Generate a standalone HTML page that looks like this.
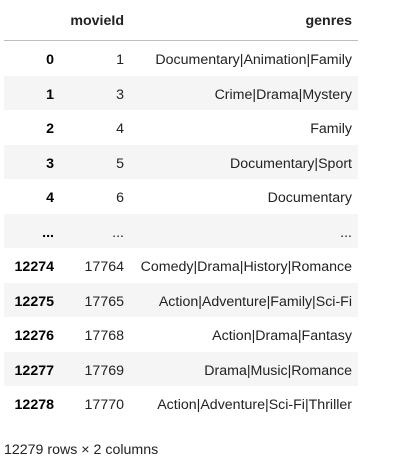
<!DOCTYPE html>
<html><head><style>
body{margin:0;background:#fff;font-family:"Liberation Sans",sans-serif;font-size:14.2px;color:#000;}
.r{position:absolute;left:4px;width:354px;height:34.5px;}
.g{background:#f5f5f5;}
.c{position:absolute;top:2px;line-height:34.5px;text-align:right;white-space:nowrap;}
.i{right:304px;font-weight:bold;}
.m{right:234px;color:#222;}
.n{right:6px;color:#222;}
.hd{position:absolute;left:4px;top:0;width:354px;height:40px;border-bottom:1px solid #bdbdbd;}
.hd .c{line-height:42px;font-weight:bold;top:0;}
.f{position:absolute;left:4px;top:442px;font-size:14.2px;color:#222;}
</style></head><body>
<div class="hd"><span class="c m">movieId</span><span class="c n">genres</span></div>
<div class="r" style="top:41px"><span class="c i">0</span><span class="c m">1</span><span class="c n">Documentary|Animation|Family</span></div>
<div class="r g" style="top:75.5px"><span class="c i">1</span><span class="c m">3</span><span class="c n">Crime|Drama|Mystery</span></div>
<div class="r" style="top:110px"><span class="c i">2</span><span class="c m">4</span><span class="c n">Family</span></div>
<div class="r g" style="top:144.5px"><span class="c i">3</span><span class="c m">5</span><span class="c n">Documentary|Sport</span></div>
<div class="r" style="top:179px"><span class="c i">4</span><span class="c m">6</span><span class="c n">Documentary</span></div>
<div class="r g" style="top:213.5px"><span class="c i">...</span><span class="c m">...</span><span class="c n">...</span></div>
<div class="r" style="top:248px"><span class="c i">12274</span><span class="c m">17764</span><span class="c n">Comedy|Drama|History|Romance</span></div>
<div class="r g" style="top:282.5px"><span class="c i">12275</span><span class="c m">17765</span><span class="c n">Action|Adventure|Family|Sci-Fi</span></div>
<div class="r" style="top:317px"><span class="c i">12276</span><span class="c m">17768</span><span class="c n">Action|Drama|Fantasy</span></div>
<div class="r g" style="top:351.5px"><span class="c i">12277</span><span class="c m">17769</span><span class="c n">Drama|Music|Romance</span></div>
<div class="r" style="top:386px"><span class="c i">12278</span><span class="c m">17770</span><span class="c n">Action|Adventure|Sci-Fi|Thriller</span></div>
<div class="f">12279 rows × 2 columns</div>
</body></html>
